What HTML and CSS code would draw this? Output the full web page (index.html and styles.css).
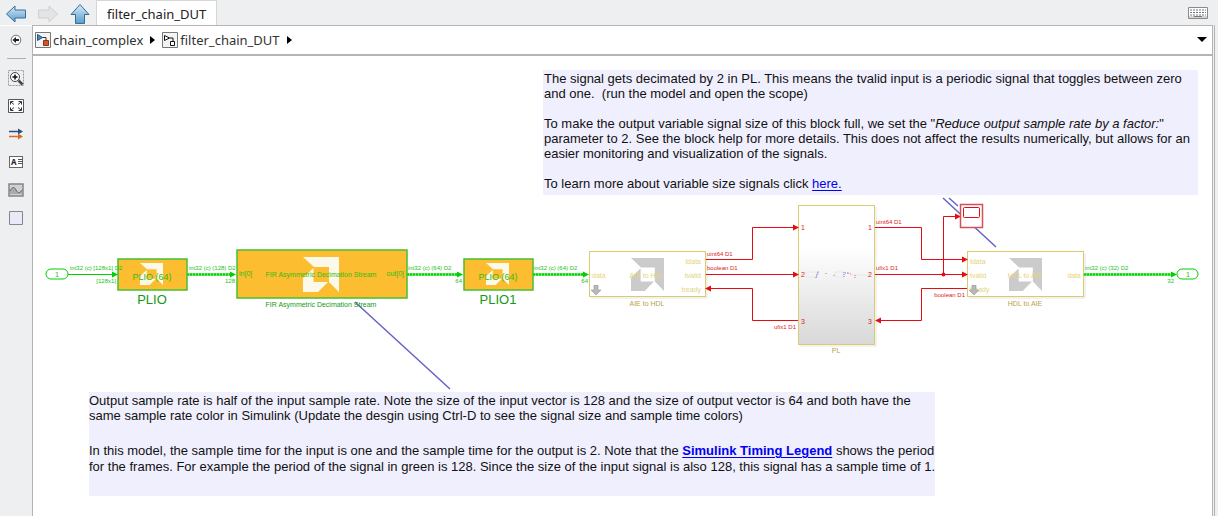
FILE: index.html
```html
<!DOCTYPE html>
<html lang="en">
<head>
<meta charset="utf-8">
<title>filter_chain_DUT</title>
<link rel="stylesheet" href="styles.css">
</head>
<body>
<div class="app">
  <header class="tabbar">
    <nav class="history" aria-label="History">
      <button class="icon-btn" aria-label="Back"><svg width="22" height="20" viewBox="0 0 22 20"><defs><linearGradient id="blue" x1="0" y1="0" x2="0" y2="1"><stop offset="0" stop-color="#d5eaf8"/><stop offset="1" stop-color="#5a9dcb"/></linearGradient></defs><path d="M1.500 10 10 2v4h10.500v8H10v4z" fill="url(#blue)" stroke="#366d98"/></svg></button>
      <button class="icon-btn" aria-label="Forward" disabled><svg width="22" height="20" viewBox="0 0 22 20"><path d="M20.500 10 12 2v4H1.500v8H12v4z" fill="#e4e4e4" stroke="#cfcfcf"/></svg></button>
      <button class="icon-btn" aria-label="Up to parent"><svg width="22" height="22" viewBox="0 0 22 22"><path d="M11 1.500 2 11.500h4.500v9h9v-9H20z" fill="url(#blue)" stroke="#366d98"/></svg></button>
    </nav>
    <button class="tab">filter_chain_DUT</button>
    <button class="icon-btn keyboard" aria-label="Keyboard"><svg width="20" height="12" viewBox="0 0 20 12"><path d="M.5.5h19v11H.5z" fill="#fff" stroke="#8a8a8a"/><path d="M2 3h16M2 5.500h16M2 8h16" stroke="#777" stroke-dasharray="2 1"/><path d="M1 10h18" stroke="#aaa"/><path d="M6 9.500h8" stroke="#777"/></svg></button>
  </header>
  <div class="work">
    <aside class="palette">
      <button class="icon-btn hide" aria-label="Hide browser"><svg width="12" height="12" viewBox="0 0 12 12"><circle cx="6" cy="6" r="4.800" fill="#f8f8f8" stroke="#777"/><path d="M2.500 6 6 3v2h3v2H6v2z" fill="#222"/></svg></button>
      <hr class="rule">
      <div class="tools">
        <button class="icon-btn" aria-label="Zoom"><svg width="16" height="16" viewBox="0 0 16 16"><path d="M.5.5h15v15H.5z" fill="none" stroke="#999" stroke-dasharray="2 1"/><circle cx="7" cy="7" r="4.500" fill="#fff" stroke="#444"/><path d="M7 4.500v5M4.500 7h5" stroke="#111" stroke-width="1.500"/><path d="m10.500 10.500 4 4" stroke="#444" stroke-width="2.500"/></svg></button>
        <button class="icon-btn" aria-label="Fit to view"><svg width="16" height="14" viewBox="0 0 16 14"><path d="M.5.5h15v13H.5z" fill="#fff" stroke="#555"/><path d="M2.500 5.500v-3h3M10.500 2.500h3v3M13.500 8.500v3h-3M5.500 11.500h-3v-3M3 3l3 2.500M13 3l-3 2.500M13 11l-3-2.500M3 11l3-2.500" fill="none" stroke="#333"/></svg></button>
        <button class="icon-btn" aria-label="Sample time colors"><svg width="16" height="12" viewBox="0 0 16 12"><path d="M1 3.500h11" stroke="#2d4d7c" stroke-width="1.500"/><path d="M10 .5 15 3.500l-5 3z" fill="#2d4d7c"/><path d="M1 8.500h11" stroke="#d9682a" stroke-width="1.500"/><path d="m10 5.500 5 3-5 3z" fill="#d9682a"/></svg></button>
        <button class="icon-btn" aria-label="Annotation"><span class="note-icon">A<svg width="5" height="8" viewBox="0 0 5 8"><path d="M0 1.500h5M0 3.500h5M0 5.500h5" stroke="#555"/></svg></span></button>
        <button class="icon-btn" aria-label="Image"><svg width="16" height="14" viewBox="0 0 16 14"><path d="M1 1h14v12H1z" fill="#d0d0d0" stroke="#858585" stroke-width="1.500"/><path d="M2 8c2-4 4-5 6-1s4 3 6 0v4H2z" fill="#aaa"/><path d="M2 8c2-4 4-5 6-1s4 3 6 0" fill="none" stroke="#666"/></svg></button>
        <button class="icon-btn" aria-label="Area"><svg width="14" height="14" viewBox="0 0 14 14"><path d="M.5.5h13v13H.5z" fill="#e9e9f8" stroke="#858590"/></svg></button>
      </div>
    </aside>
    <main class="editor">
      <nav class="crumbs" aria-label="Model path">
        <a class="crumb" href="#model"><svg width="16" height="16" viewBox="0 0 16 16"><path d="M.5.5h15v15H.5z" fill="#f4f4f4" stroke="#777"/><path d="M2.500 2.500v6l5-3z" fill="#3c8dc8" stroke="#24567e"/><path d="M7.500 5.500h3.500v3" fill="none" stroke="#333"/><path d="M8.500 8.500h5v5h-5z" fill="#d4532b" stroke="#8d351a"/></svg>chain_complex</a>
        <svg class="sep" width="5" height="8" viewBox="0 0 5 8"><path d="m0 0 5 4-5 4z"/></svg>
        <a class="crumb" href="#subsystem"><svg width="16" height="16" viewBox="0 0 16 16"><path d="M.5.5h15v15H.5z" fill="#f4f4f4" stroke="#777"/><path d="M2.500 3.500v5l5-2.500z" fill="#fff" stroke="#111"/><path d="M7.500 6h3.500v3" fill="none" stroke="#111"/><path d="M8.500 9.500h4v4h-4z" fill="#fff" stroke="#111"/></svg>filter_chain_DUT</a>
        <svg class="sep" width="5" height="8" viewBox="0 0 5 8"><path d="m0 0 5 4-5 4z"/></svg>
        <button class="icon-btn more" aria-label="Path menu"><svg width="10" height="5" viewBox="0 0 10 5"><path d="M0 0h10L5 5z"/></svg></button>
      </nav>
      <section class="canvas" aria-label="Block diagram">
        <svg class="diagram" width="1180" height="460" viewBox="33 56 1180 460">
          <defs>
            <symbol id="logo" viewBox="0 0 36 35" preserveAspectRatio="none"><path d="M0 0h36v35L26 25V10H11zM10.500 11v14H25L15 35H0V21z"/></symbol>
            <symbol id="down" viewBox="0 0 10 10"><path d="M3 0h4v5h3l-5 5-5-5h3z" fill="#b8b8b8" stroke="#999" stroke-width=".6"/></symbol>
            <linearGradient id="shade" x1="0" y1="0" x2="0" y2="1"><stop offset=".3" stop-color="#fff"/><stop offset="1" stop-color="#d8d8d8"/></linearGradient>
          </defs>

          <g class="leader">
            <path d="M355 302 450 389M943 198 996 247M949 198l9 8"/>
          </g>

          <g class="block amber">
            <rect x="118" y="259" width="69" height="31"/>
            <rect x="237" y="250" width="170" height="48"/>
            <rect x="464" y="259" width="69" height="31"/>
          </g>
          <g fill="#fbf9ea">
            <use href="#logo" x="140" y="263" width="23" height="22"/>
            <use href="#logo" x="303" y="257" width="36" height="35"/>
            <use href="#logo" x="486" y="263" width="23" height="22"/>
          </g>
          <g class="block pale">
            <path class="shadow" d="M591 298h116v-45M969 298h116v-45M800 346h76V207"/>
            <rect x="589.500" y="251.500" width="116" height="45"/>
            <rect x="967.500" y="251.500" width="116" height="45"/>
            <rect x="798.500" y="205.500" width="76" height="139" fill="url(#shade)"/>
          </g>
          <g fill="#cbcbcb">
            <use href="#logo" x="631" y="258" width="33" height="33"/>
            <use href="#logo" x="1009" y="258" width="33" height="33"/>
          </g>
          <g fill="none" stroke="#ebe6e8"><path d="M806 272h12v5h-12zM835 272h8v5h-8zM850 275h18"/></g>
          <path d="M816 278v-2h1v-3h2M844 272v6M845 273h3" fill="none" stroke="#7478cc" stroke-dasharray="1 1"/>
          <path d="M818 272h2M826 273v1M834 275v2M848 273l3 1M855 275v3" fill="none" stroke="#d96a78" stroke-dasharray="1 1"/>

          <g class="wire green">
            <rect x="46" y="269" width="22" height="10" rx="5"/>
            <rect x="1177" y="269" width="21" height="10" rx="5"/>
            <path d="M68 274.500h45"/>
            <path class="bus" d="M187 274.500h45M407 274.500h51M533 274.500h50M1084 274.500h87"/>
            <path class="core" d="M187 274.500h45M407 274.500h51M533 274.500h50M1084 274.500h87"/>
            <path class="head" d="m112 271.500 6 3-6 3zM230 271.500l6 3-6 3zM457 271.500l6 3-6 3zM583 271.500l6 3-6 3zM1171 271.500l6 3-6 3z"/>
          </g>

          <g class="wire red">
            <path d="M706 259.500h46.500v-32H793M706 274.500h87M798 320.500h-45.500v-32H711"/>
            <path d="M875 227.500h46.500v32H962M875 274.500h87M943.500 274V216.500H955M967 288.500h-45.500v32H880"/>
            <path class="head" d="m793 224.500 6 3-6 3zM793 271.500l6 3-6 3zM711 285.500l-6 3 6 3zM962 256.500l6 3-6 3zM962 271.500l6 3-6 3zM955 213.500l6 3-6 3zM881 317.500l-6 3 6 3z"/>
            <circle class="head" cx="943.500" cy="274.500" r="2"/>
            <rect class="scope" x="960.500" y="204.500" width="22" height="23"/>
            <rect x="963.500" y="207.500" width="16" height="10" rx="1"/>
          </g>

          <g class="label signal lime">
            <text x="57" y="277" text-anchor="middle" class="port">1</text>
            <text x="1188" y="277" text-anchor="middle" class="port">1</text>
            <text x="70" y="270">int32 (c) [128x1] D2</text>
            <text x="116" y="283" text-anchor="end">[128x1]</text>
            <text x="189" y="270">int32 (c) (128) D2</text>
            <text x="235" y="283" text-anchor="end">128</text>
            <text x="408" y="270">int32 (c) (64) D2</text>
            <text x="462" y="283" text-anchor="end">64</text>
            <text x="534" y="270">int32 (c) (64) D2</text>
            <text x="588" y="283" text-anchor="end">64</text>
            <text x="1085" y="270">int32 (c) (32) D2</text>
            <text x="1174" y="283" text-anchor="end">32</text>
          </g>
          <g class="label signal crimson">
            <text x="707" y="256">uint64 D1</text>
            <text x="707" y="270">boolean D1</text>
            <text x="796" y="329" text-anchor="end">ufix1 D1</text>
            <text x="876" y="224">uint64 D1</text>
            <text x="876" y="270">ufix1 D1</text>
            <text x="965" y="297" text-anchor="end">boolean D1</text>
          </g>
          <g class="label name crimson">
            <text x="801" y="230">1</text><text x="801" y="277">2</text><text x="801" y="324">3</text>
            <text x="872" y="230" text-anchor="end">1</text><text x="872" y="277" text-anchor="end">2</text><text x="872" y="324" text-anchor="end">3</text>
          </g>
          <g class="label name leaf">
            <text x="239" y="276">in[0]</text>
            <text x="404" y="276" text-anchor="end">out[0]</text>
            <text x="321" y="277" text-anchor="middle">FIR Asymmetric Decimation Stream</text>
            <text x="152" y="280" text-anchor="middle" class="mid">PLIO (64)</text>
            <text x="498" y="280" text-anchor="middle" class="mid">PLIO (64)</text>
          </g>
          <g class="label name forest">
            <text x="321" y="307" text-anchor="middle">FIR Asymmetric Decimation Stream</text>
            <text x="152" y="304" text-anchor="middle" class="big">PLIO</text>
            <text x="498" y="304" text-anchor="middle" class="big">PLIO1</text>
          </g>
          <g class="label name straw">
            <text x="592" y="278">data</text>
            <text x="647" y="278" text-anchor="middle">AIE to HDL</text>
            <text x="701" y="264" text-anchor="end">tdata</text>
            <text x="701" y="278" text-anchor="end">tvalid</text>
            <text x="701" y="292" text-anchor="end">tready</text>
            <text x="970" y="264">tdata</text>
            <text x="970" y="278">tvalid</text>
            <text x="970" y="292">tready</text>
            <text x="1025" y="278" text-anchor="middle">HDL to AIE</text>
            <text x="1081" y="278" text-anchor="end">data</text>
          </g>
          <use href="#down" x="591" y="285" width="10" height="10"/>
          <use href="#down" x="969" y="285" width="10" height="10"/>
          <g class="label name olive">
            <text x="647" y="306" text-anchor="middle">AIE to HDL</text>
            <text x="836" y="353" text-anchor="middle">PL</text>
            <text x="1025" y="306" text-anchor="middle">HDL to AIE</text>
          </g>
        </svg>

        <div class="note note-top">
          <p>The signal gets decimated by 2 in PL. This means the tvalid input is a periodic signal that toggles between zero<br>and one.&nbsp; (run the model and open the scope)</p>
          <p>To make the output variable signal size of this block full, we set the "<em>Reduce output sample rate by a factor:</em>"<br>parameter to 2. See the block help for more details. This does not affect the results numerically, but allows for an<br>easier monitoring and visualization of the signals.</p>
          <p>To learn more about variable size signals click <a href="#help">here.</a></p>
        </div>
        <div class="note note-bottom">
          <p>Output sample rate is half of the input sample rate. Note the size of the input vector is 128 and the size of output vector is 64 and both have the<br>same sample rate color in Simulink (Update the desgin using Ctrl-D to see the signal size and sample time colors)</p>
          <p class="loose">In this model, the sample time for the input is one and the sample time for the output is 2. Note that the <a href="#legend"><b>Simulink Timing Legend</b></a> shows the period<br>for the frames. For example the period of the signal in green is 128. Since the size of the input signal is also 128, this signal has a sample time of 1.</p>
        </div>
      </section>
    </main>
  </div>
</div>
</body>
</html>
```
FILE: styles.css
```css
* { box-sizing: border-box; }
body {
  margin: 0;
  background: #eeeff1;
  color: #222;
  font: 13px/16px "Noto Sans", sans-serif;
}
.app { display: flex; flex-direction: column; min-height: 100vh; }
button { font: inherit; color: inherit; }
.icon-btn { display: flex; align-items: center; justify-content: center; padding: 0; border: 0; background: none; }
svg { display: block; flex: none; }

.tabbar { display: flex; align-items: flex-end; height: 25px; }
.history { display: flex; align-items: center; gap: 10px; width: 96px; height: 25px; padding: 2px 0 0 5px; }
.tab {
  height: 25px;
  padding: 2px 10px 0;
  border: 1px solid #d6d6d6;
  border-bottom: 0;
  background: #fff;
}
.keyboard { height: 25px; margin-left: auto; padding-right: 10px; }

.work { display: flex; flex: 1; padding-right: 2px; border-right: 3px solid #eeeff1; box-shadow: inset -1px 0 #b4b4b4; }
.palette { display: flex; flex-direction: column; align-items: center; width: 32px; border-top: 1px solid #fff; }
.hide { height: 28px; }
.rule { width: 19px; margin: 4px 0 0; border: 0; border-top: 1px solid #b0b0b0; }
.tools { display: grid; grid-auto-rows: 28px; padding-top: 5px; }
.note-icon {
  display: flex;
  align-items: center;
  gap: 1px;
  width: 14px;
  height: 12px;
  padding-left: 1px;
  border: 1px solid #666;
  background: #fff;
  font-size: 8px;
  line-height: 10px;
  font-weight: bold;
}

.editor {
  display: flex;
  flex: 1;
  flex-direction: column;
  min-width: 0;
  border: 1px solid #b4b4b4;
  border-bottom: 0;
}
.crumbs {
  display: flex;
  align-items: center;
  gap: 7px;
  height: 30px;
  padding: 0 5px 1px 2px;
  border-bottom: 2px solid #b4b4b4;
  background: #fff;
}
.crumb { display: flex; align-items: center; gap: 2px; color: #333; text-decoration: none; }
.more { margin-left: auto; }

.canvas { position: relative; flex: 1; overflow: hidden; background: #fff; }
.diagram { position: absolute; left: 0; top: 0; }

.leader { fill: none; stroke: #6463c8; stroke-width: 1.5; }
.amber rect { fill: #fcbe30; stroke: #47bf2f; stroke-width: 1.5; }
.pale rect { stroke: #dccb6c; }
.pale rect:not([fill]) { fill: #fff; }
.shadow { fill: none; stroke: #e4e4e4; }
.wire { fill: none; stroke-width: 1; }
.green { stroke: #00cf00; }
.bus { stroke: #7be87b; stroke-width: 3; }
.core { stroke: #00cf00; stroke-width: 2; stroke-dasharray: 2 1; }
.red { stroke: #e50b12; }
.scope { fill: #fff; stroke: #d65058; stroke-width: 1.5; }
.green .head { fill: #00cf00; stroke: none; }
.red .head { fill: #e50b12; stroke: none; }

.label { font-family: "Liberation Sans", Arial, sans-serif; }
.signal { font-size: 6px; }
.name, .port { font-size: 7px; }
.mid { font-size: 9px; }
.big { font-size: 13px; }
.lime { fill: #16c316; }
.crimson { fill: #dc1b23; }
.leaf { fill: #35bb10; }
.forest { fill: #159a15; }
.straw { fill: #e5d37a; }
.olive { fill: #b5a344; }

.note {
  position: absolute;
  background: #f0effe;
  color: #111;
  font: 13px/15px "Liberation Sans", Arial, sans-serif;
  white-space: nowrap;
}
.note p { margin: 0 0 15px; }
.note a { color: #0000f0; text-underline-offset: 2px; }
.note-top { left: 510px; top: 14px; width: 655px; height: 125px; padding: 1px; }
.note-bottom { left: 56px; top: 336px; width: 846px; height: 104px; padding-top: 1px; }
.note-bottom .loose { margin-top: 20px; line-height: 16px; }
```
